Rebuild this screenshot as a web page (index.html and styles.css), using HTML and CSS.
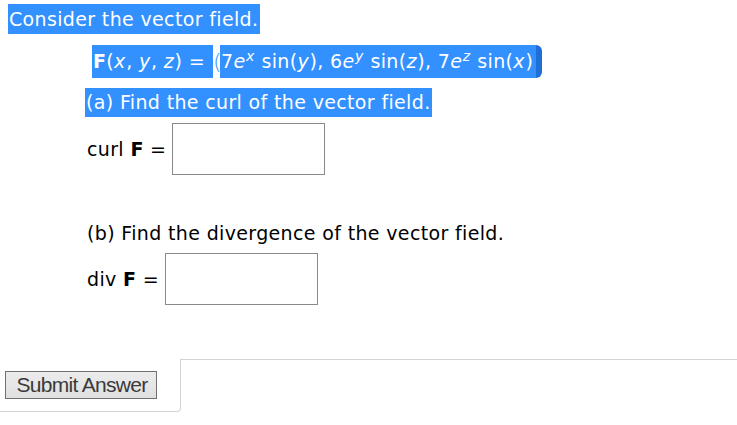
FILE: index.html
```html
<!DOCTYPE html>
<html>
<head>
<meta charset="utf-8">
<link rel="stylesheet" href="styles.css">
</head>
<body>
<div class="page">
  <div class="line1"><span class="sel">Consider the vector field.</span></div>
  <div class="eqn"><span class="sel sel-a"><b>F</b>(<i>x</i>, <i>y</i>, <i>z</i>) = </span><span class="lbr">(</span><span class="sel sel-b">7<i>e</i><sup><i>x</i></sup> sin(<i>y</i>), 6<i>e</i><sup><i>y</i></sup> sin(<i>z</i>), 7<i>e</i><sup><i>z</i></sup> sin(<i>x</i>)</span><span class="rbr"></span></div>
  <div class="parta"><span class="sel">(a) Find the curl of the vector field.</span></div>
  <div class="row row-curl"><span class="lbl">curl <b>F</b> =</span><span class="box"></span></div>
  <div class="partb">(b) Find the divergence of the vector field.</div>
  <div class="row row-div"><span class="lbl">div <b>F</b> =</span><span class="box"></span></div>
  <div class="footer">
    <div class="btn-area"><button class="submit">Submit Answer</button></div>
    <div class="tab-rest"></div>
  </div>
</div>
</body>
</html>
```
FILE: styles.css
```css
html, body { margin: 0; padding: 0; background: #fff; }
body { font-family: "DejaVu Sans", Verdana, sans-serif; font-size: 19px; letter-spacing: 0.35px; color: #000; }
.page { padding-top: 4px; }
.sel { background: #3390ff; color: #fff; display: inline-block; }
.line1 { margin-left: 8px; height: 30px; }
.line1 .sel { line-height: 30px; padding-left: 1px; padding-right: 2px; }
.eqn { margin-top: 11px; margin-left: 92px; display: flex; height: 33px; }
.eqn .sel { line-height: 33px; }
.eqn i { letter-spacing: 0.8px; }
.sel-a { width: 121px; white-space: nowrap; padding-left: 1px; box-sizing: border-box; }
.sel-b { padding-left: 1px; padding-right: 3px; }
.eqn sup { font-size: 14px; vertical-align: 7px; line-height: 0; }
.lbr { width: 7px; line-height: 33px; color: #3390ff; font-weight: 100; text-align: center; font-size: 22px; letter-spacing: 0; }
.rbr { width: 6px; height: 33px; background: #1f6fd6; border-radius: 0 8px 8px 0; }
.parta { margin-top: 10px; margin-left: 85px; height: 29px; }
.parta .sel { line-height: 29px; padding-left: 1px; padding-right: 1px; }
.row { display: flex; align-items: center; margin-left: 87px; }
.row-curl { margin-top: 6px; }
.row-div { margin-top: 9px; }
.lbl { margin-right: 6px; }
.box { display: block; width: 151px; height: 50px; border: 1px solid #8a8a8a; }
.partb { margin-left: 87px; margin-top: 47px; line-height: 22px; }
.footer { display: flex; margin-top: 54px; }
.btn-area { width: 181px; height: 53px; border-bottom: 1px solid #d4d4d4; border-right: 1px solid #d4d4d4; border-bottom-right-radius: 4px; padding-top: 12px; box-sizing: border-box; padding-left: 5px; }
.tab-rest { flex: 1; height: 1px; border-top: 1px solid #d4d4d4; }
.submit { display: block; font-family: "Liberation Sans", Arial, sans-serif; font-size: 21px; color: #3a3a3a; background: linear-gradient(#ececec, #e0e0e0); border: 1px solid #707070; border-radius: 0; height: 28px; width: 152px; padding: 0 0 0 2px; letter-spacing: -0.7px; line-height: 26px; }
```
